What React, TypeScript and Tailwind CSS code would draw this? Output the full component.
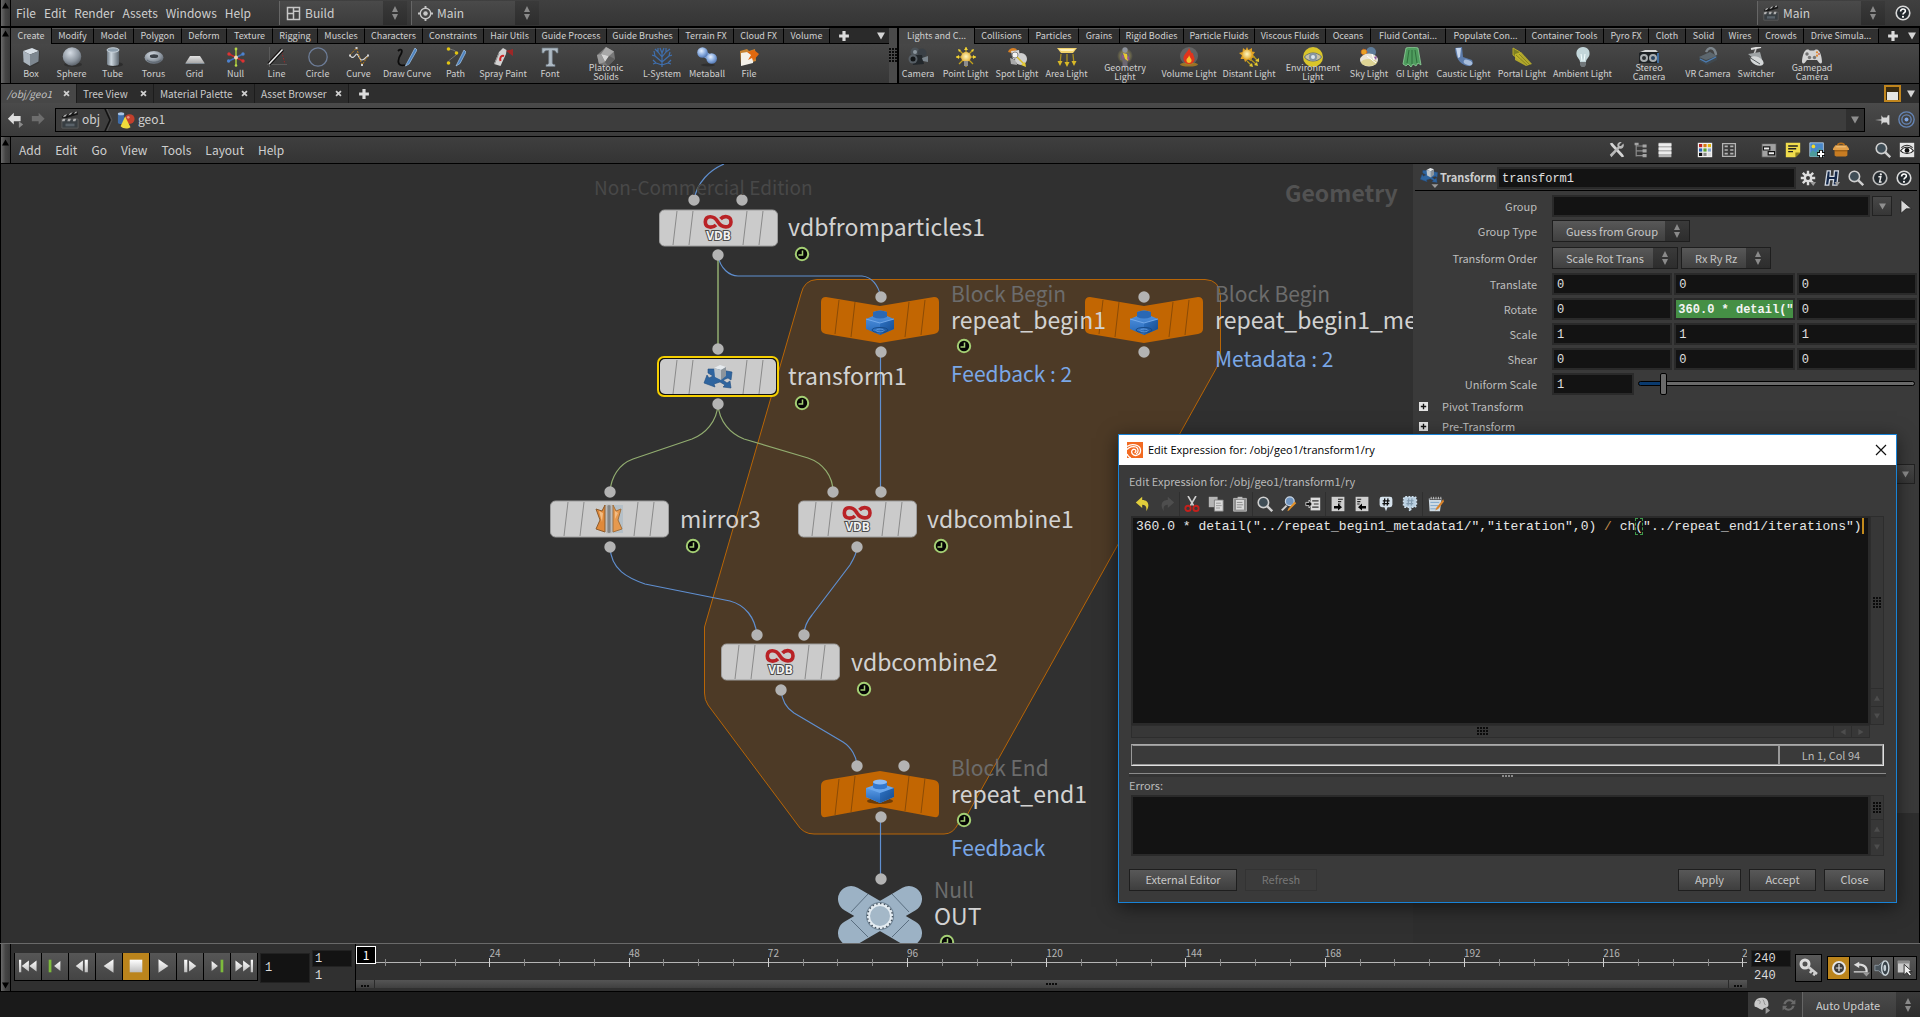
import React from "react";

type Kids = { children?: React.ReactNode };

const SANS = "font-['Noto_Sans_CJK_SC','Noto_Sans',sans-serif]";
const MONO = "font-['Liberation_Mono',monospace]";

/* ---------- drawing helpers ---------- */

function Ico({ children, className = "size-5" }: Kids & { className?: string }) {
  return (
    <svg viewBox="0 0 20 20" className={`shrink-0 ${className}`} fill="none" aria-hidden="true">
      {children}
    </svg>
  );
}

function Defs() {
  return (
    <svg className="absolute size-0" aria-hidden="true">
      <defs>
        <radialGradient id="gSphere" cx="0.4" cy="0.3" r="0.8">
          <stop offset="0" stopColor="#d5dce4" />
          <stop offset="0.6" stopColor="#8b949e" />
          <stop offset="1" stopColor="#4a5058" />
        </radialGradient>
        <radialGradient id="gBlue" cx="0.4" cy="0.35" r="0.8">
          <stop offset="0" stopColor="#e6f0ff" />
          <stop offset="0.5" stopColor="#86a9dd" />
          <stop offset="1" stopColor="#3a5f9e" />
        </radialGradient>
        <linearGradient id="gTube" x1="0" x2="1" y1="0" y2="0">
          <stop offset="0" stopColor="#6f7a84" />
          <stop offset="0.35" stopColor="#cdd7df" />
          <stop offset="1" stopColor="#5c666f" />
        </linearGradient>
        <linearGradient id="gWhite" x1="0" x2="0" y1="0" y2="1">
          <stop offset="0" stopColor="#ffffff" />
          <stop offset="1" stopColor="#bdbdbd" />
        </linearGradient>
        <radialGradient id="gSun" cx="0.5" cy="0.45" r="0.6">
          <stop offset="0" stopColor="#fff7c2" />
          <stop offset="1" stopColor="#e0a92c" />
        </radialGradient>
        <radialGradient id="gGlow">
          <stop offset="0" stopColor="#f8e76a" />
          <stop offset="1" stopColor="#f8e76a" stopOpacity="0" />
        </radialGradient>
        <linearGradient id="gBlockL" x1="0" x2="0" y1="0" y2="1">
          <stop offset="0" stopColor="#5b9be6" />
          <stop offset="1" stopColor="#2467b8" />
        </linearGradient>
        <linearGradient id="gBlockR" x1="0" x2="1" y1="0" y2="1">
          <stop offset="0" stopColor="#2f74c6" />
          <stop offset="1" stopColor="#154a8c" />
        </linearGradient>
      </defs>
    </svg>
  );
}

function Tri({ dir, className = "size-2" }: { dir: "up" | "down" | "left" | "right"; className?: string }) {
  const d = {
    up: "M4 0.5 8 7.5H0Z",
    down: "M0 0.5H8L4 7.5Z",
    left: "M7.5 0V8L0.5 4Z",
    right: "M0.5 0V8L7.5 4Z",
  }[dir];
  return (
    <svg viewBox="0 0 8 8" className={`shrink-0 ${className}`} aria-hidden="true">
      <path d={d} fill="currentColor" />
    </svg>
  );
}

function Spinner() {
  return (
    <span className="flex w-6 shrink-0 flex-col items-center justify-center self-stretch bg-gradient-to-b from-[#3a3a3a] to-[#2d2d2d] text-[#8a8a8a]">
      <svg viewBox="0 0 8 14" className="h-3.5 w-2" aria-hidden="true">
        <path d="M4 0 7 6H1ZM4 14 7 8H1Z" fill="currentColor" />
      </svg>
    </span>
  );
}

function Plus() {
  return (
    <Ico className="size-3.5">
      <path d="M10 3V17M3 10H17" stroke="#dcdcdc" strokeWidth="4.5" />
    </Ico>
  );
}

/* ---------- shelf tool icons ---------- */

const toolIcons: Record<string, React.ReactNode> = {
  Box: (
    <>
      <path d="M2 4 11 1 19 4 18 16 9 20 2 15Z" fill="#2c2c2c" opacity="0.5" />
      <path d="M2 4 11 1 18 4 9 7.500Z" fill="#d7dfe6" />
      <path d="M2 4 9 7.500V19L2.500 15Z" fill="#aab4bd" />
      <path d="M9 7.500 18 4 17.500 14.500 9 19Z" fill="#7d8790" />
    </>
  ),
  Sphere: (
    <>
      <ellipse cx="11" cy="17.500" rx="9" ry="2.500" fill="#222" opacity="0.5" />
      <circle cx="10" cy="9.500" r="9.300" fill="url(#gSphere)" />
    </>
  ),
  Tube: (
    <>
      <ellipse cx="12" cy="17.500" rx="8" ry="2.500" fill="#222" opacity="0.6" />
      <path d="M4 3V17C4 19.500 16 19.500 16 17V3Z" fill="url(#gTube)" />
      <ellipse cx="10" cy="3" rx="6" ry="2.200" fill="#8fa0ae" stroke="#c9d2da" />
    </>
  ),
  Torus: (
    <>
      <ellipse cx="10" cy="10.500" rx="9.500" ry="6.500" fill="url(#gSphere)" />
      <ellipse cx="10" cy="9.200" rx="4.200" ry="1.900" fill="#3b4148" />
      <path d="M3 13C7 16 13 16 17 13" stroke="#5d6670" />
    </>
  ),
  Grid: (
    <>
      <path d="M5 9H15L19.500 16H0.500Z" fill="url(#gWhite)" opacity="0.85" />
      <path d="M0.500 16H19.500V17H0.500Z" fill="#7f8a93" />
    </>
  ),
  Null: (
    <>
      <path d="M10 1.500V19" stroke="#a8c93a" strokeWidth="1.500" />
      <path d="M3 7 17 14" stroke="#c92a2a" strokeWidth="1.500" />
      <path d="M3 14 17 7" stroke="#3d72bd" strokeWidth="1.500" />
      <circle cx="10" cy="2" r="1.400" fill="#b9d948" />
      <circle cx="10" cy="18.500" r="1.300" fill="#b9d948" />
      <circle cx="3" cy="7" r="1.700" fill="#d33" />
      <circle cx="17" cy="14" r="1.700" fill="#d33" />
      <circle cx="2.600" cy="14" r="1.700" fill="#4e83cf" />
      <circle cx="17" cy="7" r="1.700" fill="#4e83cf" />
      <circle cx="10" cy="10.500" r="2" fill="#f2d6b0" />
    </>
  ),
  Line: (
    <>
      <path d="M2.500 0V20M0 17.500H20" stroke="#5a5a5a" />
      <path d="M2 15 14 2 18 17" stroke="#a12626" strokeDasharray="1.500 1.500" />
      <path d="M2 17 15.500 2.500" stroke="#111" strokeWidth="4" />
      <path d="M2 17 15.500 2.500" stroke="#e8e8e8" strokeWidth="1.500" />
    </>
  ),
  Circle: <circle cx="10" cy="10" r="9.200" stroke="#6d7d98" strokeWidth="1.300" />,
  Curve: (
    <>
      <path d="M1 8C3 13 6 9 7 7.500C9 5 10 13 13 13C16 13 17 9 19 9" stroke="#d8d8d8" strokeWidth="1.200" />
      <path d="M1 8 7.500 1 13 18 19 9" stroke="#c98618" strokeDasharray="2 1.200" />
      <path d="M0 9.500h2v-2h-2zM6.500 2h2v-2h-2zM12 19h2v-2h-2zM18 9.500h2v-2h-2z" fill="#cfcfcf" />
    </>
  ),
  "Draw Curve": (
    <>
      <path d="M1 4C4 1 6 3 4 7C0 13 0 20 8 18" stroke="#0c0c0c" strokeWidth="1.800" />
      <path d="M18 1 10 16 8.500 19 12 17 20 3Z" fill="#4d82bf" stroke="#a7c7e6" strokeWidth="0.700" />
    </>
  ),
  Path: (
    <>
      <path d="M3 2C10 3 12 6 10 8C5 12 -1 16 3 16" stroke="#777" />
      <circle cx="2.500" cy="2" r="1.800" fill="#e2c511" />
      <circle cx="10.500" cy="6" r="1.800" fill="#e2c511" />
      <circle cx="2.500" cy="16" r="1.800" fill="#e2c511" />
      <path d="M18 3 12 15 10 19 14 16.500 20 5Z" fill="#4d82bf" stroke="#a7c7e6" strokeWidth="0.700" />
    </>
  ),
  "Spray Paint": (
    <>
      <path d="M13 4 20 2V9Z" fill="#b52020" opacity="0.8" />
      <path d="M6 5 10 1 13.500 3 13 7 7.500 19 1 17Z" fill="#d2d2d2" />
      <path d="M6 6 1.500 17" stroke="#8a8a8a" />
      <path d="M11 9C8 8 6.500 11 7.500 14" stroke="#c22" strokeWidth="2" />
    </>
  ),
  Font: (
    <path
      d="M2 1H18V6H16.500C16 4 15 3.500 12.300 3.500V15.500C12.300 17 13 17.500 15 17.500V19.500H6V17.500C8 17.500 8.700 17 8.700 15.500V3.500C5 3.500 4.500 4 4 6H2Z"
      fill="#aebac4"
      stroke="#6b7680"
      strokeWidth="0.700"
    />
  ),
  "Platonic Solids": (
    <>
      <path d="M10 0 18 4.500 19 12 12 19 3 17 1 8Z" fill="#787878" />
      <path d="M10 0 18 4.500 13 9 5 7Z" fill="#a8a8a8" />
      <path d="M5 7 13 9 9 15Z" fill="#d5d5d5" />
      <path d="M5 7 9 15 3 17 1 8Z" fill="#9a9a9a" />
      <path d="M13 9 19 12 12 19 9 15Z" fill="#606060" />
    </>
  ),
  "L-System": (
    <path
      d="M10 20V6M10 15 3 9M10 15 17 9M10 10 6 5M10 10 14 5M10 6 8 1M10 6 12 1M3 9 0 8M3 9 2 4M6 5 3 2M6 5 6 1M14 5 14 1M14 5 18 2M17 9 20 8M17 9 18 5M10 18 4 16M10 18 16 16M4 16 1 17M4 16 1 13M16 16 19 17M16 16 19 13"
      stroke="#3f6fae"
      strokeWidth="1.200"
    />
  ),
  Metaball: (
    <>
      <ellipse cx="11" cy="18" rx="7" ry="1.500" fill="#252525" opacity="0.6" />
      <path d="M6 6 15 12" stroke="#7ea0d2" strokeWidth="6" />
      <circle cx="5.500" cy="5.500" r="5.300" fill="url(#gBlue)" />
      <circle cx="14.700" cy="11.500" r="5.300" fill="url(#gBlue)" />
    </>
  ),
  File: (
    <>
      <path d="M1 4 8 2 10 4 16 2 17 14 2 18Z" fill="#c88432" />
      <path d="M2 6 15 4 14 16 2 19Z" fill="#f4f1ea" />
      <path d="M8 5 15 3 20 7 14 14 13 11 9 13 12 8Z" fill="#e1690f" />
    </>
  ),
  Camera: (
    <>
      <circle cx="7" cy="5" r="4.500" fill="#4b5258" />
      <circle cx="14" cy="6" r="4.500" fill="#3a4046" />
      <circle cx="7" cy="5" r="2" fill="#8a949c" />
      <path d="M3 8 14 8 16 17 5 18Z" fill="#22272b" />
      <circle cx="5" cy="12" r="4.500" fill="#565e65" />
      <circle cx="5" cy="12" r="2.500" fill="#121517" />
      <path d="M14 11 20 9V15L15 14Z" fill="#7b858d" />
    </>
  ),
  "Point Light": (
    <>
      <path d="M10 0V20M0 10H20M3 3 17 17M17 3 3 17" stroke="#c2a01c" strokeWidth="1.300" />
      <path d="M10 0 8 3H12ZM0 10 3 8V12ZM20 10 17 8V12ZM2 2 5 3 3 5ZM18 2 15 3 17 5Z" fill="#f0d438" />
      <circle cx="10" cy="10" r="5" fill="url(#gSun)" />
      <path d="M8 14H12V19H8Z" fill="#8c8c8c" />
    </>
  ),
  "Spot Light": (
    <>
      <path d="M1 5C2 0 9 0 10 3L5 6Z" fill="#d98124" />
      <path d="M4 4 12 3 13 11 6 12Z" fill="#dadada" />
      <path d="M3 11 9 13 10 18 4 17Z" fill="#a9a9a9" />
      <circle cx="14" cy="12" r="6" fill="#cfcfcf" />
      <circle cx="8" cy="8" r="3" fill="#f4f4f4" stroke="#888" />
      <path d="M10 10 18 18" stroke="#d9bd26" strokeWidth="1.500" />
      <path d="M19 20 14 18 18 15Z" fill="#e6cc36" />
    </>
  ),
  "Area Light": (
    <>
      <path d="M0 1H20L16 6H4Z" fill="#f2d36b" />
      <path d="M2 2H18L16 4H4Z" fill="#fff0b8" />
      <path d="M4 7 3 17M10 7V18M16 7 17 17" stroke="#a88d1d" strokeWidth="1.300" />
      <path d="M0.500 14H5.500L3 19ZM7.500 15H12.500L10 20ZM14.500 14H19.500L17 19Z" fill="#d8b927" />
    </>
  ),
  "Geometry Light": (
    <>
      <circle cx="10" cy="9" r="8" fill="url(#gGlow)" opacity="0.7" />
      <circle cx="10" cy="3" r="2.700" fill="#8d929c" />
      <path d="M6 6H14L15 13 12.500 13 12.500 20H7.500V13H5Z" fill="#6b6670" />
      <path d="M8 6 12 7 13 14 10 12Z" fill="#e8c934" />
      <path d="M7 8 9 9 8 13ZM12 11 14 9V14Z" fill="#9c4f9c" />
    </>
  ),
  "Volume Light": (
    <>
      <circle cx="10" cy="9" r="9" fill="#9a9a9a" opacity="0.35" />
      <ellipse cx="10" cy="17.500" rx="9" ry="2" fill="#c48a1a" opacity="0.7" />
      <path d="M10 1C9 5 4 7 4.500 12C5 16 8 17 10 17C13 17 16 15 15.500 11C15 9 14 8 14 6C12 7 12 4 10 1Z" fill="#e0341c" />
      <path d="M10 8C10 11 7 11 7.500 14C8 16.500 12 16.500 12.500 14C13 12 11 11 10 8Z" fill="#f6c12f" />
    </>
  ),
  "Distant Light": (
    <>
      <path d="M8 0 9.500 3 13 1 13 4.500 16 5 14 8 16 10 13 11 12 14 9 12.500 6 15 5 12 1.500 12 3 8.500 0 6 3.500 5 4 1 6.500 3Z" fill="#dfa023" />
      <circle cx="8" cy="7.500" r="4.700" fill="url(#gSun)" />
      <path d="M14 9 18 13M11 12 17 17M8 14 12 18" stroke="#b99a1a" strokeWidth="1.200" />
      <path d="M20 11V15L16 14ZM19 19 15 18 18 15ZM14 20 10 19 13 16Z" fill="#e3c831" />
    </>
  ),
  "Environment Light": (
    <>
      <circle cx="10" cy="10" r="10" fill="#d9c52b" />
      <path d="M1 10C5 4 15 4 19 10C15 16 5 16 1 10Z" fill="#5d6d7c" />
      <path d="M2 10C6 5 14 5 18 10C14 15 6 15 2 10Z" fill="#c9c2a4" />
      <circle cx="10" cy="10" r="4" fill="#8494a2" />
      <circle cx="10" cy="10" r="2" fill="#dce6ee" />
    </>
  ),
  "Sky Light": (
    <>
      <circle cx="12" cy="5" r="5" fill="#5f7c99" />
      <circle cx="5" cy="5" r="2.800" fill="#e9a225" stroke="#e95f16" strokeDasharray="1 1" />
      <ellipse cx="10" cy="13" rx="9" ry="6.500" fill="#e9e4d6" />
      <ellipse cx="10" cy="15.500" rx="8" ry="3.500" fill="#d9cd77" opacity="0.7" />
      <path d="M8 9 17 16M13 7 15 13" stroke="#fff" />
      <path d="M15 10 18 9 17 13Z" fill="#8c5aa0" />
    </>
  ),
  "GI Light": (
    <>
      <path d="M4 1C7 0 13 0 16 1L19 18 16 16 14 19 11 17 9 20 6 17 4 19 1 17Z" fill="#4f9d5e" stroke="#8fd19a" strokeWidth="0.800" />
      <path d="M7 3 5 16M10 3V17M13 3 15 16" stroke="#2f6d3c" />
    </>
  ),
  "Caustic Light": (
    <>
      <path d="M1 1 8 0 9 10 18 13C20 17 18 19 14 19C8 18 2 14 1 1Z" fill="#5d7cab" />
      <path d="M2 1 7 1 6 10 4 11Z" fill="#c7d6ec" />
      <ellipse cx="14" cy="15.500" rx="4.500" ry="2.500" fill="#a7bddb" transform="rotate(20 14 15.500)" />
    </>
  ),
  "Portal Light": (
    <>
      <path d="M1 1 8 5V13L1 8Z" fill="#7d7f23" stroke="#b7aa2a" />
      <path d="M3 7 9 5 20 17 14 19 3 13Z" fill="#c4b92a" opacity="0.85" />
      <path d="M4 8 15 18M7 7 18 18" stroke="#8b861c" />
    </>
  ),
  "Ambient Light": (
    <>
      <path d="M10 0C15 0 17 4 16.500 7.500C16 11 13 12 13 15H7C7 12 4 11 3.500 7.500C3 4 5 0 10 0Z" fill="#c3d6da" />
      <path d="M8 7 9 14M12 7 11 14" stroke="#f4ffff" />
      <path d="M7 15H13V18L11.500 20H8.500L7 18Z" fill="#707679" />
    </>
  ),
  "Stereo Camera": (
    <>
      <path d="M0 6 6 3H17L20 6V16H0Z" fill="#1c2023" />
      <path d="M1 5 6 3H17L19 5Z" fill="#d6d6d6" />
      <circle cx="5" cy="11" r="4" fill="#a9adb0" />
      <circle cx="5" cy="11" r="2" fill="#272b2e" />
      <circle cx="14" cy="11" r="4" fill="#a9adb0" />
      <circle cx="14" cy="11" r="2" fill="#2b4460" />
      <path d="M18 6H20V16H18Z" fill="#3f6da1" />
    </>
  ),
  "VR Camera": (
    <>
      <path d="M8 5C11 -1 17 0 18 8" stroke="#7c858c" strokeWidth="2.500" />
      <path d="M1 10 12 5 19 9 19 13 9 18 1 14Z" fill="#40484e" />
      <path d="M1 10 12 5 19 9 8 13Z" fill="#5d676e" />
      <path d="M2 12 8 15 18 10" stroke="#4c7eb5" strokeWidth="1.300" />
    </>
  ),
  Switcher: (
    <>
      <path d="M5 2 15 0" stroke="#e2e2e2" strokeWidth="2" />
      <path d="M10 2 7 10" stroke="#c8c8c8" strokeWidth="1.500" />
      <path d="M2 7 14 5 17 16 8 12Z" fill="#9fa4a6" />
      <ellipse cx="11" cy="14" rx="7" ry="4" fill="#d4d7d8" transform="rotate(25 11 14)" />
      <path d="M3 10 14 17" stroke="#565b5d" />
    </>
  ),
  "Gamepad Camera": (
    <>
      <path d="M4 3C6 2 7 3 8 3.500H12C13 3 14 2 16 3C19 5 20 12 20 15C19 18 17 16 15 13H5C3 16 1 18 0 15C0 12 1 5 4 3Z" fill="#d3d3d3" />
      <circle cx="5" cy="7" r="1.700" fill="#6d6d6d" />
      <circle cx="12.500" cy="10.500" r="1.700" fill="#777" />
      <circle cx="7.500" cy="10.500" r="1.700" fill="#777" />
      <circle cx="15" cy="5.300" r="1.100" fill="#e2882b" />
      <circle cx="15" cy="8.700" r="1.100" fill="#e2882b" />
      <circle cx="17" cy="7" r="1" fill="#c65" />
    </>
  ),
};

/* ---------- shelves ---------- */

type Item = [string, string];

const leftTabs: Item[] = [
  ["Create", "w-[41px]"],
  ["Modify", "w-[42px]"],
  ["Model", "w-[40px]"],
  ["Polygon", "w-[48px]"],
  ["Deform", "w-[45px]"],
  ["Texture", "w-[46px]"],
  ["Rigging", "w-[45px]"],
  ["Muscles", "w-[47px]"],
  ["Characters", "w-[58px]"],
  ["Constraints", "w-[61px]"],
  ["Hair Utils", "w-[52px]"],
  ["Guide Process", "w-[71px]"],
  ["Guide Brushes", "w-[72px]"],
  ["Terrain FX", "w-[55px]"],
  ["Cloud FX", "w-[50px]"],
  ["Volume", "w-[46px]"],
];

const leftTools: Item[] = [
  ["Box", "w-[40px]"],
  ["Sphere", "w-[41px]"],
  ["Tube", "w-[41px]"],
  ["Torus", "w-[41px]"],
  ["Grid", "w-[41px]"],
  ["Null", "w-[41px]"],
  ["Line", "w-[41px]"],
  ["Circle", "w-[41px]"],
  ["Curve", "w-[41px]"],
  ["Draw Curve", "w-[56px]"],
  ["Path", "w-[41px]"],
  ["Spray Paint", "w-[54px]"],
  ["Font", "w-[40px]"],
  ["Platonic Solids", "w-[72px]"],
  ["L-System", "w-[40px]"],
  ["Metaball", "w-[50px]"],
  ["File", "w-[34px]"],
];

const rightTabs: Item[] = [
  ["Lights and C...", "w-[76px]"],
  ["Collisions", "w-[54px]"],
  ["Particles", "w-[50px]"],
  ["Grains", "w-[41px]"],
  ["Rigid Bodies", "w-[64px]"],
  ["Particle Fluids", "w-[71px]"],
  ["Viscous Fluids", "w-[71px]"],
  ["Oceans", "w-[45px]"],
  ["Fluid Contai...", "w-[75px]"],
  ["Populate Con...", "w-[80px]"],
  ["Container Tools", "w-[78px]"],
  ["Pyro FX", "w-[45px]"],
  ["Cloth", "w-[37px]"],
  ["Solid", "w-[36px]"],
  ["Wires", "w-[37px]"],
  ["Crowds", "w-[45px]"],
  ["Drive Simula...", "w-[75px]"],
];

const rightTools: Item[] = [
  ["Camera", "w-[38px]"],
  ["Point Light", "w-[57px]"],
  ["Spot Light", "w-[46px]"],
  ["Area Light", "w-[53px]"],
  ["Geometry Light", "w-[64px]"],
  ["Volume Light", "w-[64px]"],
  ["Distant Light", "w-[56px]"],
  ["Environment Light", "w-[72px]"],
  ["Sky Light", "w-[40px]"],
  ["GI Light", "w-[46px]"],
  ["Caustic Light", "w-[57px]"],
  ["Portal Light", "w-[60px]"],
  ["Ambient Light", "w-[61px]"],
  ["Stereo Camera", "w-[72px]"],
  ["VR Camera", "w-[46px]"],
  ["Switcher", "w-[50px]"],
  ["Gamepad Camera", "w-[62px]"],
];

const twoLine = new Set(["Platonic Solids", "Geometry Light", "Environment Light", "Stereo Camera", "Gamepad Camera"]);

function Shelf({ tabs, tools, className, gap }: { tabs: Item[]; tools: Item[]; className: string; gap: string }) {
  return (
    <section className={`flex min-w-0 flex-col overflow-hidden bg-[#2a2a2a] ${className}`}>
      <div className="flex h-4 items-stretch" role="tablist">
        {tabs.map(([name, w], i) => (
          <button
            key={name}
            role="tab"
            aria-selected={i === 0}
            className={`${w} shrink-0 whitespace-nowrap border-r border-black pb-px text-center text-[9px] leading-[13px] ${
              i === 0 ? "bg-[#464646]" : "border-b border-t border-t-[#555] bg-[#303030]"
            } text-[#d0d0d0]`}
          >
            {name}
          </button>
        ))}
        <div className={`flex flex-1 items-center border-b border-black pl-[7px] pr-1 text-[#d5d5d5] ${gap}`}>
          <button aria-label="Add shelf">
            <Plus />
          </button>
          <button aria-label="Shelf menu">
            <Tri dir="down" />
          </button>
        </div>
      </div>
      <div className="flex h-[39px] bg-gradient-to-b from-[#474747] to-[#363636]">
        {tools.map(([name, w]) => (
          <button key={name} className={`${w} flex shrink-0 flex-col items-center pt-[3px] text-[#d0d0d0]`}>
            <Ico>{toolIcons[name]}</Ico>
            {twoLine.has(name) ? (
              <span className="-mt-1 block w-min text-center text-[9px] leading-[9px]">{name}</span>
            ) : (
              <span className="mt-px block whitespace-nowrap text-[9px] leading-3">{name}</span>
            )}
          </button>
        ))}
      </div>
    </section>
  );
}

function Handle({ bottom = false }: { bottom?: boolean }) {
  return (
    <div
      className={`flex w-[11px] shrink-0 flex-col items-center border-x border-black bg-gradient-to-r from-[#6a6a6a] via-[#454545] to-[#3a3a3a] text-black ${
        bottom ? "justify-end pb-0.5" : "pt-0.5"
      }`}
    >
      <Tri dir={bottom ? "down" : "up"} className="size-[7px]" />
    </div>
  );
}

function Grip({ cols = 3, rows = 5, dark = true }: { cols?: number; rows?: number; dark?: boolean }) {
  const dots: React.ReactNode[] = [];
  for (let r = 0; r < rows; r++)
    for (let c = 0; c < cols; c++)
      dots.push(<rect key={`${r}-${c}`} x={c * 3} y={r * 3} width="2" height="2" fill={dark ? "#0b0b0b" : "#8a8a8a"} />);
  return (
    <svg width={cols * 3} height={rows * 3} className="shrink-0" aria-hidden="true">
      {dots}
    </svg>
  );
}

function Clapper({ className = "size-[18px]" }: { className?: string }) {
  return (
    <Ico className={className}>
      <path d="M1 6 18 0 19 4 2 9Z" fill="#161616" />
      <path d="M2 7 4 4.500 7 3.500 5 6ZM8 5 10 2.500 13 1.500 11 4ZM14 3 16 0.700 18 0.500 17 2.500Z" fill="#b5b5b5" />
      <path d="M1 9H19V19H1Z" fill="#383e42" stroke="#666" strokeWidth="0.800" />
      <path d="M2 8.500H5L4 11.500H1ZM8 8.500H11L10 11.500H7ZM14 8.500H17L16 11.500H13Z" fill="#b0b0b0" />
      <path d="M5 14H15V17H5Z" fill="#596269" />
    </Ico>
  );
}

function HelpIcon({ className = "size-4" }: { className?: string }) {
  return (
    <Ico className={className}>
      <circle cx="10" cy="10" r="8.500" fill="#23292e" stroke="#d8d8d8" strokeWidth="2" />
      <path d="M7 8C7 4 13 4 13 7.500C13 9.500 10 9.500 10 12" stroke="#fff" strokeWidth="2" />
      <circle cx="10" cy="14.800" r="1.300" fill="#fff" />
    </Ico>
  );
}

function Magnifier({ className = "size-4" }: { className?: string }) {
  return (
    <Ico className={className}>
      <path d="M12 12 19 19" stroke="#d0d0d0" strokeWidth="3" />
      <circle cx="8" cy="8" r="6.500" fill="#3f4d56" stroke="#cfcfcf" strokeWidth="2" />
    </Ico>
  );
}

function DeskSelect({ icon, value, label }: { icon: React.ReactNode; value: string; label: string }) {
  return (
    <label className="flex h-6 w-32 shrink-0 items-center border-l border-[#666] bg-gradient-to-b from-[#4a4a4a] to-[#3c3c3c] pl-[3px]">
      <span className="flex w-5 justify-center">{icon}</span>
      <select aria-label={label} className="min-w-0 flex-1 appearance-none pl-0.5 text-[12px] leading-5 text-[#cfcfcf] outline-none">
        <option>{value}</option>
      </select>
      <Spinner />
    </label>
  );
}

function TopBar() {
  return (
    <header className="flex h-[27px] shrink-0 items-stretch border-b border-black bg-gradient-to-b from-[#404040] to-[#353535]">
      <Handle />
      <nav className="flex items-center gap-2 pl-[5px] pr-7 text-[12px] leading-5 text-[#cfcfcf]">
        {["File", "Edit", "Render", "Assets", "Windows", "Help"].map((m) => (
          <button key={m}>{m}</button>
        ))}
      </nav>
      <div className="flex items-center gap-1">
        <DeskSelect
          label="Desktop"
          value="Build"
          icon={
            <Ico className="size-[15px]">
              <path d="M2 2H18V18H2ZM10 2V18M2 10H10M10 7H18" stroke="#c6c6c6" strokeWidth="2" />
            </Ico>
          }
        />
        <DeskSelect
          label="Radial menu"
          value="Main"
          icon={
            <Ico className="size-[15px]">
              <circle cx="10" cy="10" r="7" stroke="#c6c6c6" strokeWidth="1.800" />
              <circle cx="10" cy="10" r="3" fill="#c6c6c6" />
              <path d="M10 0V4M10 16V20M0 10H4M16 10H20" stroke="#c6c6c6" strokeWidth="2.500" />
            </Ico>
          }
        />
      </div>
      <div className="ml-auto flex items-center gap-2.5 pr-[9px]">
        <DeskSelect label="Take" value="Main" icon={<Clapper className="size-4" />} />
        <button aria-label="Help">
          <HelpIcon />
        </button>
      </div>
    </header>
  );
}

/* ---------- pane header ---------- */

function PaneTabs() {
  const tabs: [string, string][] = [
    ["/obj/geo1", "w-[76px]"],
    ["Tree View", "w-[77px]"],
    ["Material Palette", "w-[101px]"],
    ["Asset Browser", "w-[94px]"],
  ];
  return (
    <div className="flex h-[19px] shrink-0 items-stretch border-x border-black bg-[#2e2e2e]" role="tablist">
      {tabs.map(([name, w], i) => (
        <div
          key={name}
          className={`${w} flex items-center justify-between border-r border-[#1c1c1c] px-[6px] text-[10px] leading-4 ${
            i === 0 ? "bg-[#474747] italic text-[#c0c0c0]" : "bg-[#2c2c2c] text-[#cacaca]"
          }`}
        >
          <button role="tab" aria-selected={i === 0} className="whitespace-nowrap">
            {name}
          </button>
          <button aria-label={`Close ${name}`}>
            <Ico className="size-[7px]">
              <path d="M3 3 17 17M17 3 3 17" stroke="#cfcfcf" strokeWidth="5" />
            </Ico>
          </button>
        </div>
      ))}
      <button aria-label="New tab" className="flex items-center pl-2">
        <Plus />
      </button>
      <div className="ml-auto flex items-center gap-1.5 pr-1 text-[#d5d5d5]">
        <button aria-label="Maximize pane" className="flex h-[17px] w-[17px] items-center justify-center">
          <svg viewBox="0 0 17 17" className="size-[17px]" aria-hidden="true">
            <rect x="1" y="1" width="15" height="15" fill="#3a2c12" stroke="#c0851d" strokeWidth="2" />
            <rect x="3" y="7" width="11" height="8" fill="#e6e6e2" />
          </svg>
        </button>
        <button aria-label="Pane menu">
          <Tri dir="down" />
        </button>
      </div>
    </div>
  );
}

function PathBar() {
  return (
    <div className="flex h-[33px] shrink-0 items-center border-x border-black bg-gradient-to-b from-[#4a4a4a] to-[#3b3b3b] pl-1.5 pr-1">
      <button aria-label="Back" className="flex">
        <Ico className="size-[17px]">
          <path d="M1 9 8 2V6H16V12H8V16Z" fill="#dedede" />
          <path d="M14 12V20L19 16Z" fill="#8a8a8a" />
        </Ico>
      </button>
      <button aria-label="Forward" className="ml-[7px] mr-[7px] flex">
        <Ico className="size-[17px]">
          <path d="M16 9 9 2V6H1V12H9V16Z" fill="#6d6d6d" />
        </Ico>
      </button>
      <nav
        aria-label="Network path"
        className="flex h-6 flex-1 items-center border border-black bg-[#3d3d3d] pl-[5px] text-[12px] leading-5 text-[#cfcfcf]"
      >
        <Clapper />
        <a href="#obj" className="ml-[3px] pb-0.5">
          obj
        </a>
        <svg viewBox="0 0 10 22" className="ml-1 h-[22px] w-2.5" fill="none" aria-hidden="true">
          <path d="M1 0 6 11 1 22" stroke="#111" strokeWidth="1.500" />
          <path d="M3 0 8 11 3 22" stroke="#555" />
        </svg>
        <Ico className="ml-[3px] size-[18px]">
          <path d="M1 3V13C1 15 8 15 8 13V3Z" fill="#3f6da8" />
          <ellipse cx="4.500" cy="3" rx="3.500" ry="1.700" fill="#a9c4e4" />
          <circle cx="14" cy="9" r="5.500" fill="#c2402c" />
          <circle cx="12.500" cy="7" r="1.500" fill="#e69284" />
          <path d="M9 6 15 18C12 20 7 20 4 17Z" fill="#efdb3c" />
        </Ico>
        <a href="#geo1" className="ml-[3px] pb-0.5">
          geo1
        </a>
        <button aria-label="Path history" className="ml-auto flex h-[22px] w-[18px] items-center justify-center bg-[#303030] text-[#8f8f8f]">
          <Tri dir="down" />
        </button>
      </nav>
      <div className="flex items-center gap-[7px] pl-2.5">
        <button aria-label="Pin">
          <Ico className="size-4">
            <path d="M0 10 9 9V11Z" fill="#ccc" />
            <path d="M8 4 10 7 15 7 16 4H18V16H16L15 13H10L8 16Z" fill="#d8d8d8" />
          </Ico>
        </button>
        <button aria-label="Link">
          <Ico className="size-[17px]">
            <circle cx="10" cy="10" r="9" stroke="#6585b5" strokeWidth="1.600" />
            <circle cx="10" cy="10" r="5.500" stroke="#6585b5" strokeWidth="1.600" />
            <circle cx="10" cy="10" r="2.300" fill="#7fa7e6" />
          </Ico>
        </button>
      </div>
    </div>
  );
}

function NetworkMenu() {
  const palette = ["#b22", "#d87a12", "#e1b610", "#2a63b8", "#5aa02c", "#88a7cf", "#111", "#888", "#ddd"];
  return (
    <div className="flex h-7 shrink-0 items-stretch border-y border-black bg-gradient-to-b from-[#3f3f3f] to-[#343434]">
      <Handle />
      <nav className="flex items-center gap-3.5 pl-2 text-[12px] leading-5 text-[#cfcfcf]">
        {["Add", "Edit", "Go", "View", "Tools", "Layout", "Help"].map((m) => (
          <button key={m}>{m}</button>
        ))}
      </nav>
      <div className="ml-auto flex items-center gap-2 pr-[5px]">
        <button aria-label="Tools">
          <Ico className="size-4">
            <path d="M1 2 4 1 17 15 19 18 16 19 3 5Z" fill="#d5d5d5" />
            <path d="M18 2 15 5 13 5 13 3 16 0C12 -1 9 3 11 6L1 16 3 19 13 8C16 10 20 6 18 2Z" fill="#b9b9b9" />
          </Ico>
        </button>
        <button aria-label="Tree">
          <Ico className="size-4">
            <path d="M4 2V18M4 5H14M4 11H14M4 17H14" stroke="#8b8b8b" strokeWidth="1.500" />
            <path d="M2 1H7V4H2ZM12 3H17V7H12ZM12 9H17V13H12ZM12 15H17V19H12Z" fill="#a5a5a5" />
          </Ico>
        </button>
        <button aria-label="List">
          <Ico className="size-4">
            <path d="M2 1H18V19H2Z" fill="#b4b4b4" />
            <path d="M2 2H18V5H2ZM2 7H18V10H2ZM2 12H18V15H2Z" fill="#ececec" />
          </Ico>
        </button>
        <button aria-label="Color palette" className="ml-4">
          <Ico className="size-4">
            <path d="M1 1H19V19H1Z" fill="#f1f1f1" />
            {palette.map((c, i) => (
              <rect key={c} x={2.5 + (i % 3) * 5.5} y={2.5 + Math.floor(i / 3) * 5.5} width="4" height="4" fill={c} />
            ))}
          </Ico>
        </button>
        <button aria-label="Shape palette">
          <Ico className="size-4">
            <path d="M2 2H18V18H2Z" fill="#3b3b3b" stroke="#b4b4b4" strokeWidth="1.600" />
            <path d="M4.500 5.500H8.500M11.500 5.500H15.500M4.500 10H8.500M11.500 10H15.500M4.500 14.500H8.500M11.500 14.500H15.500" stroke="#b4b4b4" strokeWidth="2" />
          </Ico>
        </button>
        <button aria-label="Network boxes" className="ml-4">
          <Ico className="size-4">
            <path d="M1 2H19V19H1Z" fill="#a2a2a2" stroke="#444" />
            <path d="M3 6H11V10H3ZM9 12H17V16H9Z" fill="#eee" stroke="#111" strokeWidth="1.500" />
          </Ico>
        </button>
        <button aria-label="Sticky note">
          <Ico className="size-4">
            <path d="M1 1H19V13L13 19H1Z" fill="#f0dc4c" />
            <path d="M19 13H13V19Z" fill="#8e7f1e" />
            <path d="M4 5H16M4 8.500H14M4 12H10" stroke="#222" strokeWidth="1.700" />
          </Ico>
        </button>
        <button aria-label="Background image">
          <Ico className="size-4">
            <path d="M1 1H18V18H1Z" fill="#4a88c9" stroke="#b9d2e9" />
            <circle cx="5.500" cy="5.500" r="2.300" fill="#f2d92a" />
            <path d="M1 18V14L5 10 8 13 13 7 18 12V18Z" fill="#4c9c9c" />
            <path d="M15 10V20M10 15H20" stroke="#111" strokeWidth="5" />
            <path d="M15 11V19M11 15H19" stroke="#fff" strokeWidth="2.500" />
          </Ico>
        </button>
        <button aria-label="Dependencies">
          <Ico className="size-4">
            <path d="M6 4C6 1 14 1 14 4" stroke="#b56f1c" strokeWidth="2" />
            <path d="M3 4H17L20 8V10H0V8Z" fill="#e2a04a" />
            <path d="M2 10H18V17L16 18H4L2 17Z" fill="#c87c22" />
            <path d="M4 6H16" stroke="#f6cd90" />
            <path d="M2 11H18" stroke="#7d4b10" />
          </Ico>
        </button>
        <button aria-label="Find" className="ml-[18px]">
          <Magnifier />
        </button>
        <button aria-label="Display options">
          <Ico className="size-4">
            <path d="M1 1H19V19H1Z" fill="#e6e6e6" />
            <path d="M2 11C6 5 14 5 18 11C14 15.500 6 15.500 2 11Z" fill="#fff" stroke="#222" strokeWidth="1.300" />
            <path d="M3 7C7 3 13 3 17 7" stroke="#222" strokeWidth="1.300" />
            <circle cx="10" cy="10.500" r="3" fill="#111" />
          </Ico>
        </button>
      </div>
    </div>
  );
}

/* ---------- network canvas ---------- */

function Dot({ x, y }: { x: number; y: number }) {
  return <circle cx={x} cy={y} r="5.700" fill="#b3b3b3" />;
}

function Ticks({ color }: { color: string }) {
  return <path d="M-41 -17-45 17M-25 -17-29 17M29 -17 25 17M45 -17 41 17" stroke={color} strokeWidth="1" fill="none" />;
}

function Plate({ x, y, selected = false, children }: Kids & { x: number; y: number; selected?: boolean }) {
  return (
    <g transform={`translate(${x} ${y})`}>
      {selected && <rect x="-60" y="-20" width="120" height="39" rx="6" fill="#111" stroke="#f5cf00" strokeWidth="2" />}
      <rect
        x={selected ? -58 : -58.5}
        y="-18"
        width={selected ? 116 : 118}
        height={selected ? 35 : 36}
        rx="5"
        fill="#cbcbcb"
        stroke="#9d9d9d"
        strokeOpacity={selected ? 0 : 1}
      />
      <Ticks color="#8a8a8a" />
      {children}
    </g>
  );
}

function VdbArt() {
  return (
    <g>
      <path
        d="M-2 -3C-5 0-12.500 0.500-12.700 -6C-12.500 -13-4 -13 0 -6C4 0.500 12.700 0.500 13 -6C13 -12.500 5.500 -12.500 2.500 -9"
        fill="none"
        stroke="#b92226"
        strokeWidth="3.600"
      />
      <text
        x="0.500"
        y="12"
        textAnchor="middle"
        className="font-['Noto_Sans',sans-serif] text-[12px] font-bold"
        fill="#f2f2f2"
        stroke="#4a4a4a"
        strokeWidth="2"
        paintOrder="stroke"
      >
        VDB
      </text>
    </g>
  );
}

function TransformArt({ y = 0 }: { y?: number }) {
  return (
    <g transform={`translate(0 ${y})`}>
      <path
        d="M-14 6-11 -2-9 1-5 -1-10 -4-10 -8 -2 -8 14 -5 13 3 10 1 5 3 9 6 12 4 13 11 5 10 7 8 2 5-4 7-3 10Z"
        fill="#2f659f"
        stroke="#1f4c80"
        strokeWidth="0.600"
      />
      <path d="M-4 -9 2 -12 8 -10 3 -7Z" fill="#e6ebef" />
      <path d="M-4 -9 3 -7V3L-3 0Z" fill="#bcc4ca" />
      <path d="M3 -7 8 -10 8 -1 3 3Z" fill="#8b949c" />
    </g>
  );
}

function MirrorArt() {
  return (
    <g>
      <path d="M3 -14H14V14H3Z" fill="#b5c0c8" />
      <path d="M-4 -14-7 -8-13 -10-9 1-13 10-4 13Z" fill="#e0893a" stroke="#8a5a2c" />
      <path d="M4 -14 7 -8 12 -10 9 1 13 10 4 13Z" fill="#e7994e" stroke="#a1703e" />
      <path d="M-10 -8-6 -6-7 3ZM6 -8 9 -6 6 0Z" fill="#f3bd84" />
      <path d="M-2.500 -14H2.500V14H-2.500Z" fill="#9b9b9b" stroke="#bdbdbd" />
      <path d="M0 -14V14" stroke="#6e6e6e" />
    </g>
  );
}

function BlockBegin({ x }: { x: number }) {
  return (
    <g transform={`translate(${x} 156)`}>
      <path d="M-54 -23 0 -14 54 -23Q59 -23 59 -18V9Q59 13 54 14L0 23-54 14Q-59 13-59 9V-18Q-59 -23-54 -23Z" fill="#c26602" />
      <path d="M-41 -20-45 14M-25 -18-29 17M29 -18 25 17M45 -20 41 15" stroke="#8b4b06" fill="none" />
      <path d="M-14 -1-7 -4V-8Q0 -11 7 -8V-4L14 -1V9L0 15-14 9Z" fill="url(#gBlockL)" />
      <path d="M0 3 14 -1V9L0 15Z" fill="url(#gBlockR)" />
      <path d="M-7 -8Q0 -11 7 -8V-3Q0 0-7 -3Z" fill="#2a68b4" />
      <path d="M-14 -1 0 3 14 -1" stroke="#7fb2f0" strokeWidth="0.800" fill="none" />
      <ellipse cx="0" cy="10" rx="8" ry="2.500" fill="none" stroke="#164a88" />
      <ellipse cx="0" cy="10.500" rx="4" ry="1.500" fill="none" stroke="#5d95d8" />
    </g>
  );
}

function BlockEnd() {
  return (
    <g transform="translate(880 625)">
      <path d="M0 -18 54 -9Q59 -8 59 -3V24Q59 29 54 28L0 18-54 28Q-59 29-59 24V-3Q-59 -8-54 -9Z" fill="#c26602" />
      <path d="M-41 -10-45 26M-25 -13-29 23M29 -13 25 22M45 -11 41 24" stroke="#8b4b06" fill="none" />
      <ellipse cx="0" cy="12" rx="13" ry="3" fill="#6b3b08" />
      <path d="M-14 -1 0 -6 14 -1V8L0 14-14 8Z" fill="#68a6ec" />
      <path d="M-14 -1 0 4V14L-14 8Z" fill="url(#gBlockL)" />
      <path d="M14 -1 0 4V14L14 8Z" fill="url(#gBlockR)" />
      <path d="M-7 -7V-2C-7 1 7 1 7 -2V-7Z" fill="#3478cc" />
      <ellipse cx="0" cy="-7" rx="7" ry="2.500" fill="#8bbcf5" />
    </g>
  );
}

function Badge({ x, y }: { x: number; y: number }) {
  return (
    <g transform={`translate(${x} ${y})`}>
      <circle r="6.200" fill="#050505" stroke="#a4cf74" strokeWidth="2" />
      <path d="M0.500 -3.500V1H-3.500" stroke="#a4cf74" strokeWidth="1.500" fill="none" />
    </g>
  );
}

const dots: [number, number][] = [
  [694, 36], [742, 36], [718, 91], [718, 185], [718, 240], [610, 328], [610, 383],
  [833, 328], [881, 328], [857, 383], [881, 133], [881, 188], [1144, 133], [1144, 188],
  [757, 471], [804, 471], [781, 526], [857, 602], [904, 602], [881, 653], [881, 715],
];

const badges: [number, number][] = [
  [802, 90], [802, 239], [693, 382], [941, 382], [964, 182], [864, 525], [964, 656], [947, 778],
];

const nameText = "text-[23px] text-[#d2d2d2]";
const kindText = "text-[21px] text-[#6c6c6c]";
const infoText = "text-[21px] text-[#7aa7e6]";

const labels: [string, string, string][] = [
  ["vdbfromparticles1", "left-[788px] top-[46px]", nameText],
  ["transform1", "left-[788px] top-[195px]", nameText],
  ["mirror3", "left-[680px] top-[338px]", nameText],
  ["vdbcombine1", "left-[927px] top-[338px]", nameText],
  ["vdbcombine2", "left-[851px] top-[481px]", nameText],
  ["Block Begin", "left-[951px] top-[113px]", kindText],
  ["repeat_begin1", "left-[951px] top-[139px]", nameText],
  ["Feedback : 2", "left-[951px] top-[193px]", infoText],
  ["Block Begin", "left-[1215px] top-[113px]", kindText],
  ["repeat_begin1_metadata1", "left-[1215px] top-[139px]", nameText],
  ["Metadata : 2", "left-[1215px] top-[178px]", infoText],
  ["Block End", "left-[951px] top-[587px]", kindText],
  ["repeat_end1", "left-[951px] top-[613px]", nameText],
  ["Feedback", "left-[951px] top-[667px]", infoText],
  ["Null", "left-[934px] top-[709px]", kindText],
  ["OUT", "left-[934px] top-[735px]", nameText],
];

function Network() {
  return (
    <section aria-label="Network editor" className="relative min-w-0 flex-1 overflow-hidden border-l border-black bg-[#303030]">
      <div className="absolute -left-px top-0 h-full w-[1413px]">
        <svg className="absolute left-0 top-0" width="1413" height="780" fill="none" aria-hidden="true">
          <path
            d="M817 115.500H1205Q1220 116 1220.500 132V190Q1220.500 198 1217 203L966 653 958 660Q953 670 944 670H814Q803 670 797 660L708 541Q704.500 536 704.500 529V463L801 130Q804 116 817 115.500Z"
            fill="#4d3a26"
            stroke="#b86506"
          />
          <g stroke="#5f8fd0" strokeWidth="1.200">
            <path d="M694 36C697 18 710 6 724 0" />
            <path d="M718 91C720 105 730 112 738 112H862C872 113 878 121 881 133" />
            <path d="M880.500 188V328" />
            <path d="M610 383C611 406 628 414 645 420L730 437C745 441 755 453 757 471" />
            <path d="M857 383C857 389 853 396 850 401L812 451C807 457 804 464 804 471" />
            <path d="M781 526C782 537 786 544 794 549L843 578C851 583 857 593 857 602" />
            <path d="M880.500 653V715" />
          </g>
          <g stroke="#92ad70" strokeWidth="1.200">
            <path d="M718 91V185" strokeWidth="1.500" />
            <path d="M718 240C717 258 705 270 692 275L633 295C619 300 611 313 610 328" />
            <path d="M718 240C719 258 731 270 744 275L808 294C823 299 833 312 833 328" />
          </g>
          {dots.map(([x, y]) => (
            <Dot key={`${x}-${y}`} x={x} y={y} />
          ))}
          <Plate x={718} y={64}>
            <VdbArt />
          </Plate>
          <Plate x={718} y={213} selected>
            <TransformArt />
          </Plate>
          <Plate x={609} y={355}>
            <MirrorArt />
          </Plate>
          <Plate x={857} y={355}>
            <VdbArt />
          </Plate>
          <Plate x={780} y={498}>
            <VdbArt />
          </Plate>
          <BlockBegin x={880} />
          <BlockBegin x={1144} />
          <BlockEnd />
          <g transform="translate(880 752)">
            <path d="M-29 -17 29 17M29 -17-29 17" stroke="#9cb2c5" strokeWidth="26" strokeLinecap="round" />
            <path d="M-12 -22-29 -4M12 -22 29 -4M-29 4-12 21M29 4 12 21" stroke="#5a6e80" />
            <circle r="14" fill="#6f8496" />
            <circle r="11.500" fill="#a4b8c8" stroke="#e4ecf2" strokeWidth="3" />
            <circle r="12.500" stroke="#45525e" strokeWidth="1.500" strokeDasharray="1.500 2.400" />
          </g>
          {badges.map(([x, y]) => (
            <Badge key={`${x}-${y}`} x={x} y={y} />
          ))}
        </svg>
        <span className="absolute left-[594px] top-[7px] whitespace-nowrap text-[19px] leading-8 text-[#484848]">Non-Commercial Edition</span>
        <span className="absolute left-[1285px] top-3 text-[23px] font-bold leading-8 text-[#525252]">Geometry</span>
        {labels.map(([t, pos, tone]) => (
          <span key={pos} className={`absolute whitespace-nowrap leading-8 ${pos} ${tone}`}>
            {t}
          </span>
        ))}
      </div>
    </section>
  );
}

/* ---------- parameter panel ---------- */

function Field({ label, value, className = "" }: { label: string; value: string; className?: string }) {
  return (
    <input
      aria-label={label}
      defaultValue={value}
      className={`h-[22px] min-w-0 border-2 border-[#2a2a2a] pt-0.5 text-[12px] leading-4 outline-none ${MONO} ${className}`}
    />
  );
}

const darkField = "bg-[#131313] px-[3px] text-[#e0e0e0]";

function ParmSelect({ value, label, className }: { value: string; label: string; className: string }) {
  return (
    <span className={`flex h-[22px] border border-[#1e1e1e] bg-gradient-to-b from-[#585858] to-[#404040] ${className}`}>
      <select aria-label={label} className="min-w-0 flex-1 appearance-none pl-[13px] text-[11px] leading-5 text-[#c6c6c6] outline-none">
        <option>{value}</option>
      </select>
      <Spinner />
    </span>
  );
}

function Row({ label, children, className }: Kids & { label: string; className: string }) {
  return (
    <div className={`flex items-center ${className}`}>
      <span className="w-[122px] shrink-0 text-right text-[11px] leading-5 text-[#bdbdbd]">{label}</span>
      <div className="ml-[15px] flex min-w-0 flex-1 items-center">{children}</div>
    </div>
  );
}

function DropButton({ label }: { label: string }) {
  return (
    <button
      aria-label={label}
      className="flex h-5 w-5 shrink-0 items-center justify-center border border-[#222] bg-gradient-to-b from-[#484848] to-[#363636] text-[#8f8f8f]"
    >
      <Tri dir="down" className="size-[7px]" />
    </button>
  );
}

function Parameters() {
  const vectors: [string, string[]][] = [
    ["Translate", ["0", "0", "0"]],
    ["Rotate", ["0", '360.0 * detail("', "0"]],
    ["Scale", ["1", "1", "1"]],
    ["Shear", ["0", "0", "0"]],
  ];
  return (
    <aside className="flex w-[507px] shrink-0 flex-col border-r border-black bg-[#2e2e2e]">
      <div className="h-[649px] shrink-0 bg-[#3a3a3a] px-0.5">
        <div className="flex h-[27px] items-center border-b border-black pl-1 pt-px">
          <svg viewBox="-16 -16 32 32" className="size-5 shrink-0" aria-hidden="true">
            <TransformArt y={-4} />
            <path d="M4 10H15L9.500 16Z" fill="#9a9a9a" />
          </svg>
          <span className="w-[58px] pb-px text-center text-[11px] font-bold leading-5 text-[#cfcfcf]">Transform</span>
          <Field label="Node name" value="transform1" className={`flex-1 ${darkField}`} />
          <div className="flex gap-2 pl-1 pr-[5px]">
            <button aria-label="Gear menu">
              <Ico className="size-4">
                <path d="M10 1V19M1 10H19M3.500 3.500 16.500 16.500M16.500 3.500 3.500 16.500" stroke="#dedede" strokeWidth="3" />
                <circle cx="10" cy="10" r="5.500" fill="#dedede" />
                <circle cx="10" cy="10" r="2.500" fill="#3a3a3a" />
                <path d="M13 15H20L16.500 20Z" fill="#9a9a9a" />
              </Ico>
            </button>
            <button aria-label="Presets">
              <Ico className="size-4">
                <path d="M4 1H8L7.500 8H12.500L13 1H18L16 19H11L12 12H7L6 19H1.500Z" fill="#14284a" stroke="#d5dce5" strokeWidth="1.600" />
                <path d="M13 15H20L16.500 20Z" fill="#9a9a9a" />
              </Ico>
            </button>
            <button aria-label="Search parameters">
              <Magnifier />
            </button>
            <button aria-label="Node info">
              <Ico className="size-4">
                <circle cx="10" cy="10" r="8.500" fill="#23292e" stroke="#bdbdbd" strokeWidth="2" />
                <path d="M8 8.500H11L9.500 15H12" stroke="#eee" strokeWidth="1.800" />
                <circle cx="11" cy="5.500" r="1.400" fill="#eee" />
              </Ico>
            </button>
            <button aria-label="Node help">
              <HelpIcon />
            </button>
          </div>
        </div>
        <Row label="Group" className="mt-[3px] h-6">
          <Field label="Group" value="" className={`mr-0.5 flex-1 ${darkField}`} />
          <DropButton label="Group menu" />
          <button aria-label="Select group" className="ml-[6px] mr-1 flex">
            <Ico className="size-[15px]">
              <path d="M4 1 18 13 11 13 4 19Z" fill="#d9d9d9" stroke="#222" />
            </Ico>
          </button>
        </Row>
        <Row label="Group Type" className="h-[26px]">
          <ParmSelect label="Group type" value="Guess from Group" className="w-[138px]" />
        </Row>
        <Row label="Transform Order" className="h-[27px]">
          <ParmSelect label="Transform order" value="Scale Rot Trans" className="mr-[3px] w-[126px]" />
          <ParmSelect label="Rotate order" value="Rx Ry Rz" className="w-[90px]" />
        </Row>
        {vectors.map(([name, vals]) => (
          <Row key={name} label={name} className="h-[25px]">
            <div className="grid flex-1 grid-cols-3 gap-0.5">
              {vals.map((v, i) => (
                <Field
                  key={i}
                  label={`${name} ${"xyz"[i]}`}
                  value={v}
                  className={v.length > 1 ? "bg-[#458f45] pl-0.5 font-bold text-[#f4f4f4]" : darkField}
                />
              ))}
            </div>
          </Row>
        ))}
        <Row label="Uniform Scale" className="h-[25px]">
          <Field label="Uniform scale" value="1" className={`w-[82px] ${darkField}`} />
          <input
            type="range"
            aria-label="Uniform scale slider"
            min="0"
            max="10"
            step="0.1"
            defaultValue="0.8"
            className="ml-1 mr-0.5 h-6 min-w-0 flex-1 appearance-none bg-transparent [&::-webkit-slider-runnable-track]:h-[5px] [&::-webkit-slider-runnable-track]:rounded-sm [&::-webkit-slider-runnable-track]:border [&::-webkit-slider-runnable-track]:border-black [&::-webkit-slider-runnable-track]:bg-[linear-gradient(to_right,#0a3a6e_9%,#6a6a6a_9%)] [&::-webkit-slider-thumb]:-mt-[9px] [&::-webkit-slider-thumb]:h-[22px] [&::-webkit-slider-thumb]:w-[7px] [&::-webkit-slider-thumb]:appearance-none [&::-webkit-slider-thumb]:rounded-[2px] [&::-webkit-slider-thumb]:border [&::-webkit-slider-thumb]:border-black [&::-webkit-slider-thumb]:bg-[#6a6a6a]"
          />
        </Row>
        {["Pivot Transform", "Pre-Transform"].map((g) => (
          <button key={g} className="flex h-5 items-center gap-[14px] pl-1 text-[11px] leading-5 text-[#bdbdbd]">
            <Ico className="size-[9px]">
              <path d="M0 0H20V20H0Z" fill="#e2e2e2" />
              <path d="M10 4V16M4 10H16" stroke="#111" strokeWidth="3" />
            </Ico>
            {g}
          </button>
        ))}
        <div className="mt-[28px] flex justify-end pr-0.5">
          <DropButton label="Attributes menu" />
        </div>
      </div>
    </aside>
  );
}

/* ---------- expression dialog ---------- */

function VScroll({ className = "" }: { className?: string }) {
  return (
    <div className={`flex w-3.5 shrink-0 flex-col border border-[#2d2d2d] bg-[#373737] text-[#4d4d4d] ${className}`}>
      <div className="flex flex-1 items-center justify-center border-b border-[#2d2d2d]">
        <Grip cols={3} rows={4} />
      </div>
      <div className="flex h-[18px] items-center justify-center border-b border-[#2d2d2d]">
        <Tri dir="up" className="size-1.5" />
      </div>
      <div className="flex h-[17px] items-center justify-center">
        <Tri dir="down" className="size-1.5" />
      </div>
    </div>
  );
}

function DialogButton({ children, className, disabled = false }: Kids & { className: string; disabled?: boolean }) {
  return (
    <button
      disabled={disabled}
      className={`h-[22px] border pb-0.5 text-[11px] leading-[18px] ${
        disabled
          ? "border-[#333] bg-[#3b3b3b] text-[#777]"
          : "border-[#1e1e1e] bg-gradient-to-b from-[#585858] to-[#3e3e3e] text-[#c8c8c8]"
      } ${className}`}
    >
      {children}
    </button>
  );
}

const noteShape = "M2 4Q2 1 5 1H15Q18 1 18 4V11Q18 14 15 14H12L10 19 8 14H5Q2 14 2 11Z";

const editorTools: [string, React.ReactNode, boolean][] = [
  ["Undo", <path d="M1 8 9 1V5C17 5 19 12 14 19C15 13 13 11 9 11V15Z" fill="#e0cd3b" />, false],
  ["Redo", <path d="M19 8 11 1V5C3 5 1 12 6 19C5 13 7 11 11 11V15Z" fill="#4e4e4e" />, true],
  [
    "Cut",
    <>
      <path d="M5 0 12 12M15 0 8 12" stroke="#cfcfcf" strokeWidth="2" />
      <circle cx="5" cy="15.500" r="3.300" stroke="#c4201c" strokeWidth="2.300" />
      <circle cx="15" cy="15.500" r="3.300" stroke="#c4201c" strokeWidth="2.300" />
    </>,
    false,
  ],
  [
    "Copy",
    <>
      <path d="M1 1H12V14H1Z" fill="#b5b5b5" />
      <path d="M8 5H19V19H8Z" fill="#dadada" stroke="#777" />
      <path d="M10 9H16M10 12H17M10 15H15" stroke="#8c8c8c" />
    </>,
    false,
  ],
  [
    "Paste",
    <>
      <path d="M2 3H18V19H2Z" fill="#8d8d8d" stroke="#c4c4c4" />
      <path d="M5 5H15V17H5Z" fill="#dadada" />
      <path d="M7 1H13V4H7Z" fill="#bdbdbd" />
      <path d="M6 8H13M6 11H14M6 14H12" stroke="#777" />
    </>,
    true,
  ],
  [
    "Find",
    <>
      <path d="M12 12 19 19" stroke="#d0d0d0" strokeWidth="3" />
      <circle cx="8" cy="8" r="6.500" fill="#3f4d56" stroke="#cfcfcf" strokeWidth="2" />
    </>,
    false,
  ],
  [
    "Replace",
    <>
      <path d="M7 12 1 18" stroke="#cfcfcf" strokeWidth="2.500" />
      <circle cx="11" cy="6.500" r="5.500" fill="#6f93bd" stroke="#c8d5e4" strokeWidth="1.500" />
      <path d="M19 9 10 18 8 19 9 16 17 7Z" fill="#e0912c" />
    </>,
    false,
  ],
  [
    "Go to line",
    <>
      <path d="M7 2H19V18H7Z" fill="#dcdcdc" />
      <path d="M9 6H17M11 10H17M9 14H17" stroke="#333" strokeWidth="1.500" />
      <path d="M1 8H5V5L9 10 5 15V12H1Z" fill="#111" stroke="#ddd" />
    </>,
    true,
  ],
  [
    "Indent",
    <>
      <path d="M2 1H18V19H2Z" fill="#cfcfcf" />
      <path d="M10 4H16M10 7H14M10 10H13" stroke="#222" strokeWidth="1.400" />
      <path d="M5 12.500H10V9.500L15 14 10 18V15.500H5Z" fill="#050505" />
    </>,
    false,
  ],
  [
    "Outdent",
    <>
      <path d="M2 1H18V19H2Z" fill="#cfcfcf" />
      <path d="M4 4H9M4 7H8M4 10H7" stroke="#222" strokeWidth="1.400" />
      <path d="M15 12.500H10V9.500L5 14 10 18V15.500H15Z" fill="#050505" />
    </>,
    false,
  ],
  [
    "Comment",
    <>
      <path d={noteShape} fill="#d6e2ec" />
      <path d="M8.500 3 7.500 12M12.500 3 11.500 12M6 6H14.500M5.500 9.500H14" stroke="#111" strokeWidth="1.600" />
    </>,
    false,
  ],
  [
    "Uncomment",
    <>
      <path d={noteShape} fill="#b9cfe0" stroke="#cfe0ee" strokeDasharray="2 2" strokeWidth="2" />
      <path d="M8.500 3 7.500 12M12.500 3 11.500 12M6 6H14.500M5.500 9.500H14" stroke="#8199ad" strokeWidth="1.400" />
    </>,
    true,
  ],
  [
    "External edit",
    <>
      <path d="M1 3H17L15 19H2Z" fill="#cfdbe4" />
      <path d="M2 3H17V5H2Z" fill="#555" />
      <path d="M4 1V4M7 1V4M10 1V4M13 1V4M16 1V4" stroke="#ddd" />
      <path d="M3 8H14M3 12H13M3 16H12" stroke="#6d9cc7" />
      <path d="M19 4 11 14 9 18 13 16 20 7Z" fill="#d9822a" />
    </>,
    false,
  ],
];

function Dialog() {
  return (
    <div
      role="dialog"
      aria-label="Edit Expression"
      className="absolute right-[23px] top-[434px] flex w-[779px] flex-col border border-[#1883d7] bg-[#3a3a3a] shadow-[0_4px_18px_rgba(0,0,0,0.55)]"
    >
      <div className="flex h-[30px] items-center bg-white pl-2 pr-[9px] font-['Open_Sans','Noto_Sans',sans-serif] text-[11px] leading-5 text-black">
        <svg viewBox="0 0 16 16" className="size-4" fill="none" aria-hidden="true">
          <path d="M0 0H16V16H0Z" fill="#f26a21" />
          <path d="M0 4.500C4 1.500 13 2 13.500 8C14 13 8 15 5.500 12C3.500 9.500 5.500 6.500 8 7.500C9.500 8.500 9 10.500 7.500 10.500M0 7.500C2 5 6 4 9 5C12 6.500 11.500 11 9 12M0 12C1 15 2.500 15.500 4 16" stroke="#fff" strokeWidth="1.300" />
        </svg>
        <span className="ml-[5px]">Edit Expression for: /obj/geo1/transform1/ry</span>
        <button aria-label="Close window" className="ml-auto">
          <svg viewBox="0 0 12 12" className="size-3" aria-hidden="true">
            <path d="M1 1 11 11M11 1 1 11" stroke="#111" strokeWidth="1.200" />
          </svg>
        </button>
      </div>
      <div className="flex flex-col px-3 pb-[11px] pt-2 text-[11px] leading-5 text-[#b9b9b9]">
        <span className="-ml-0.5 h-[18px] leading-4">Edit Expression for: /obj/geo1/transform1/ry</span>
        <div className="flex h-6 pt-px" role="toolbar">
          {editorTools.map(([name, art, sep], i) => (
            <button
              key={name}
              aria-label={name}
              className={`flex h-6 items-center justify-center ${i === 12 ? "w-[26px]" : sep ? "w-[25px] border-r border-[#2f2f2f]" : "w-6"}`}
            >
              <Ico className="size-4">{art}</Ico>
            </button>
          ))}
        </div>
        <div className="mt-px flex">
          <div className="flex min-w-0 flex-1 flex-col">
            <div
              role="textbox"
              aria-label="Expression"
              aria-multiline="true"
              contentEditable
              suppressContentEditableWarning
              className={`flex h-[209px] items-start whitespace-pre border-2 border-[#2a2a2a] bg-[#131313] pl-[3px] text-[13px] leading-[17px] text-[#e6e6e6] outline-none ${MONO}`}
            >
              <span>360.0 * detail("../repeat_begin1_metadata1/","iteration",0) </span>
              <span className="text-[#c08a4a]">/</span>
              <span> ch</span>
              <span className="outline-1 -outline-offset-1 outline-dashed outline-[#3c9a4a]">(</span>
              <span>"../repeat_end1/iterations")</span>
              <span className="h-4 w-0.5 bg-[#c28a1c]" />
            </div>
            <div className="flex h-[13px] border border-[#2d2d2d] bg-[#373737] text-[#4d4d4d]">
              <div className="flex flex-1 items-center justify-center border-r border-[#2d2d2d]">
                <Grip cols={4} rows={3} />
              </div>
              <div className="flex w-[18px] items-center justify-center border-r border-[#2d2d2d]">
                <Tri dir="left" className="size-1.5" />
              </div>
              <div className="flex w-[17px] items-center justify-center">
                <Tri dir="right" className="size-1.5" />
              </div>
            </div>
          </div>
          <VScroll className="h-[209px]" />
        </div>
        <div className="mt-1.5 flex h-[22px] border border-b-[#e0e0e0] border-l-[#999] border-r-[#e0e0e0] border-t-[#aaa]">
          <span className="flex-1 border border-r-2 border-[#999] border-l-transparent" />
          <span className="w-[103px] border border-l-0 border-[#999] text-center leading-[19px]">Ln 1, Col 94</span>
        </div>
        <div className="-mx-0.5 mt-[7px] flex h-1 justify-center border-t border-[#8a8a8a] bg-[#333] pt-px">
          <Grip cols={4} rows={1} dark={false} />
        </div>
        <span className="-ml-0.5 h-[18px] leading-4">Errors:</span>
        <div className="flex h-[61px]">
          <textarea
            aria-label="Errors"
            readOnly
            className="min-w-0 flex-1 resize-none border-2 border-[#2a2a2a] bg-[#131313] outline-none"
          />
          <VScroll />
        </div>
        <div className="-ml-0.5 -mr-px mt-[13px] flex">
          <DialogButton className="mr-2 w-[108px]">External Editor</DialogButton>
          <DialogButton className="w-[72px]" disabled>
            Refresh
          </DialogButton>
          <div className="ml-auto flex gap-2">
            <DialogButton className="w-[63px]">Apply</DialogButton>
            <DialogButton className="w-[67px]">Accept</DialogButton>
            <DialogButton className="w-[61px]">Close</DialogButton>
          </div>
        </div>
      </div>
    </div>
  );
}

/* ---------- playbar ---------- */

const W = "url(#gWhite)";
const playButtons: [string, React.ReactNode][] = [
  ["First frame", <path d="M0 3H2.500V17H0ZM3 10 11 4V16ZM11.500 10 19.500 4V16Z" fill={W} />],
  [
    "Previous key",
    <>
      <path d="M3 3H6V17H3Z" fill="#7dbb3c" />
      <path d="M9 10 16 4.500V15.500Z" fill={W} />
    </>,
  ],
  ["Previous frame", <path d="M3 10 11 4V16ZM13 3H16.500V17H13Z" fill={W} />],
  ["Play reverse", <path d="M4 10 15 2.500V17.500Z" fill={W} />],
  ["Stop", <path d="M3 3H17V17H3Z" fill={W} />],
  ["Play", <path d="M16 10 5 2.500V17.500Z" fill={W} />],
  ["Next frame", <path d="M17 10 9 4V16ZM3.500 3H7V17H3.500Z" fill={W} />],
  [
    "Next key",
    <>
      <path d="M14 3H17V17H14Z" fill="#7dbb3c" />
      <path d="M11 10 4 4.500V15.500Z" fill={W} />
    </>,
  ],
  ["Last frame", <path d="M20 3H17.500V17H20ZM17 10 9 4V16ZM8.500 10 0.500 4V16Z" fill={W} />],
];

function Timeline() {
  const frames = Array.from({ length: 40 }, (_, i) => (i + 1) * 6);
  return (
    <div className="flex min-w-0 flex-1 flex-col border-l border-black">
      <div className="relative h-9 overflow-hidden">
        <div className="absolute inset-x-0 top-[18px] h-px bg-[#b5b5b5]" />
        {frames.map((f) => {
          const major = f % 24 === 0;
          return (
            <div key={f} className="absolute top-0 h-full" style={{ left: `${((f - 1) / 239.8) * 100}%` }}>
              <div className={`absolute left-0 w-px ${major ? "top-[14px] h-[9px] bg-[#d0d0d0]" : "top-[15px] h-[7px] bg-[#8a8a8a]"}`} />
              {major && <span className="absolute left-0 top-[3px] text-[10px] leading-3 text-[#b5b5b5]">{f}</span>}
            </div>
          );
        })}
        <div className="absolute left-0 top-[2px] flex h-[18px] w-[20px] items-center justify-center border border-white bg-black text-[12px] leading-4 text-white">
          1
        </div>
      </div>
      <div className="flex h-2 items-center justify-between bg-gradient-to-b from-[#555] to-[#404040]">
        <span className="flex h-full w-[19px] items-end justify-center border-r border-[#2a2a2a]">
          <Grip cols={3} rows={1} />
        </span>
        <Grip cols={4} rows={1} />
        <span className="flex h-full w-[19px] items-end justify-center border-l border-[#2a2a2a]">
          <Grip cols={3} rows={1} />
        </span>
      </div>
    </div>
  );
}

function Playbar() {
  const small = "flex h-[22px] w-[22px] items-center justify-center border-r border-black last:border-r-0";
  const rangeField = `h-[17px] border border-[#222] bg-[#131313] px-0.5 text-[12px] leading-[14px] text-[#dcdcdc] outline-none ${MONO}`;
  const rangeText = `pl-[3px] text-[12px] leading-[18px] text-[#dcdcdc] ${MONO}`;
  return (
    <div className="flex h-[49px] shrink-0 items-stretch border-b border-t border-b-black border-t-[#6a6a6a] bg-[#303030]">
      <Handle bottom />
      <div className="flex items-center pl-[3px]">
        <div className="mb-0.5 flex h-7 border-b border-l border-black">
          {playButtons.map(([name, art]) => (
            <button
              key={name}
              aria-label={name}
              className={`flex w-[27px] items-center justify-center border-r border-black ${
                name === "Stop" ? "bg-[#bb841c]" : "bg-gradient-to-b from-[#565656] to-[#444]"
              }`}
            >
              <Ico className="size-[18px]">{art}</Ico>
            </button>
          ))}
        </div>
        <input
          aria-label="Current frame"
          defaultValue="1"
          className={`ml-0.5 h-[30px] w-[50px] border border-[#222] bg-[#131313] px-1 text-[12px] text-[#dcdcdc] outline-none ${MONO}`}
        />
        <div className="ml-0.5 mr-[3px] flex w-10 flex-col">
          <input aria-label="Range start" defaultValue="1" className={`w-full ${rangeField}`} />
          <span className={rangeText}>1</span>
        </div>
      </div>
      <Timeline />
      <div className="flex items-center">
        <div className="ml-1 flex w-10 flex-col">
          <input aria-label="Range end" defaultValue="240" className={`w-full ${rangeField}`} />
          <span className={rangeText}>240</span>
        </div>
        <button
          aria-label="Set key"
          className="ml-1 flex h-7 w-[27px] items-center justify-center border border-black bg-gradient-to-b from-[#5a5a5a] to-[#404040]"
        >
          <Ico className="size-5">
            <circle cx="6" cy="6" r="4" stroke="#dcdcdc" strokeWidth="3" />
            <path d="M9 8.500 18 16M13 12 11 15M16 14.500 14.500 17.500" stroke="#d0d0d0" strokeWidth="2.500" />
          </Ico>
        </button>
        <div className="ml-[5px] mr-[3px] flex border border-black bg-gradient-to-b from-[#565656] to-[#444]">
          <button aria-label="Real time" className={`${small} bg-[#bb841c]`}>
            <Ico className="size-4">
              <circle cx="10" cy="10" r="7.500" fill="#3b3b3b" stroke="#e4e4e4" strokeWidth="2.500" />
              <path d="M10 5V10H14M6 10H10V14" stroke="#e4e4e4" strokeWidth="1.500" />
            </Ico>
          </button>
          <button aria-label="Loop" className={small}>
            <Ico className="size-[18px]">
              <path d="M2 15V13.500H15C15 10 13 7.500 8 7.500V10L2 6.500 8 3V5C15 5 18 9 17.500 15Z" fill="#dcdcdc" />
              <path d="M12 15H20L16 19.500Z" fill="#9a9a9a" />
            </Ico>
          </button>
          <button aria-label="Audio" className={small}>
            <Ico className="size-[18px]">
              <path d="M1 7H5L11 2V18L5 13H1Z" fill="#4a555d" stroke="#8d99a1" />
              <ellipse cx="12.500" cy="10" rx="4" ry="8" fill="#39434a" stroke="#d0dadf" strokeWidth="1.500" />
              <ellipse cx="12" cy="10" rx="1.500" ry="3.500" fill="#c7d1d7" />
            </Ico>
          </button>
          <button aria-label="Playbar options" className={small}>
            <Ico className="size-[18px]">
              <path d="M2 2H15V15H2Z" fill="#c9c9c9" />
              <path d="M2 2H15V5H2Z" fill="#8d8d8d" />
              <path d="M9 6V18L12 15 15 19 17 17 14.500 14H18Z" fill="#eee" stroke="#222" />
            </Ico>
          </button>
        </div>
      </div>
    </div>
  );
}

function StatusBar() {
  return (
    <footer className="flex h-[25px] shrink-0 justify-end bg-[#1a1a1a]">
      <div className="flex items-stretch bg-[#383838]">
        <button aria-label="Cook controls" className="flex w-[27px] items-center justify-center">
          <Ico className="size-[18px]">
            <path d="M2 12C0 6 5 1 10 2C15 1 18 6 17 11C15 14 12 12 11 15C8 16 7 13 2 12Z" fill="#c9c9c9" />
            <path d="M5 5C8 4 9 7 7 9M11 4C13 6 12 9 14 10" stroke="#8a8a8a" />
            <path d="M14 12V20L19 16Z" fill="#9a9a9a" />
          </Ico>
        </button>
        <button aria-label="Refresh" className="flex w-[27px] items-center justify-center">
          <Ico className="size-4">
            <path d="M3 9C4 3 12 1 16 5L18 3V9H12L14 7C11 4 7 5 6 9ZM17 11C16 17 8 19 4 15L2 17V11H8L6 13C9 16 13 15 14 11Z" fill="#6a6a6a" />
          </Ico>
        </button>
        <label className="flex w-[118px] items-stretch border-l border-[#666] bg-gradient-to-b from-[#4a4a4a] to-[#3c3c3c]">
          <select aria-label="Update mode" className="min-w-0 flex-1 appearance-none pl-[13px] text-[11px] leading-5 text-[#cfcfcf] outline-none">
            <option>Auto Update</option>
          </select>
          <Spinner />
        </label>
      </div>
    </footer>
  );
}

export default function App() {
  return (
    <div className={`relative flex h-screen flex-col overflow-hidden bg-black ${SANS}`}>
      <Defs />
      <TopBar />
      <div className="flex h-[57px] shrink-0 items-stretch border-b border-t border-black">
        <Handle />
        <Shelf tabs={leftTabs} tools={leftTools} className="w-[878px] shrink-0" gap="justify-between" />
        <div className="flex w-2.5 shrink-0 items-center justify-center border-r-2 border-black bg-[#4a4a4a]">
          <Grip />
        </div>
        <Shelf tabs={rightTabs} tools={rightTools} className="flex-1 border-r border-black" gap="gap-2" />
      </div>
      <PaneTabs />
      <PathBar />
      <NetworkMenu />
      <main className="flex min-h-0 flex-1">
        <Network />
        <Parameters />
      </main>
      <Playbar />
      <StatusBar />
      <Dialog />
    </div>
  );
}
